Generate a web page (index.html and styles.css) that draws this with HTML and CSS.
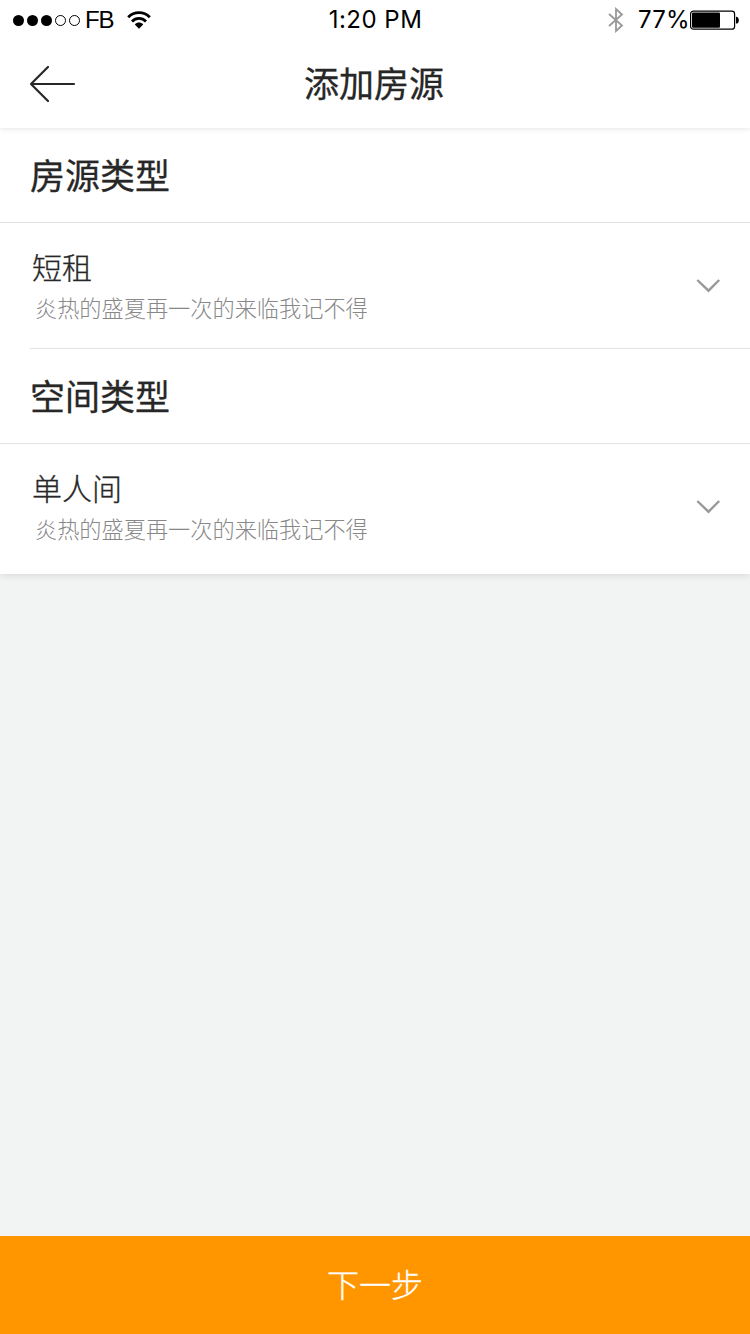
FILE: index.html
```html
<!DOCTYPE html>
<html lang="zh-CN">
<head>
  <meta charset="UTF-8" />
  <meta name="viewport" content="width=device-width, initial-scale=1.0" />
  <title>添加房源</title>
  <link rel="stylesheet" href="styles.css">
</head>
<body>

<header class="top">
  <div class="status">
    <div class="status-left">
      <svg class="signal" width="70" height="14" viewBox="0 0 70 14">
        <circle cx="6.5" cy="7.5" r="5.5" />
        <circle cx="20.5" cy="7.5" r="5.5" />
        <circle cx="34.5" cy="7.5" r="5.5" />
        <circle class="empty" cx="48.5" cy="7.5" r="5" />
        <circle class="empty" cx="62.5" cy="7.5" r="5" />
      </svg>
      <span class="carrier">FB</span>
      <svg class="wifi" width="24" height="18" viewBox="0 0 24 18">
        <path class="arc" d="M1.2 6.2C7.2.1 16.8.1 22.8 6.2M5 10.4c3.9-4 10.1-4 14 0" />
        <path d="M7.8 13.4c2.3-2.4 6.1-2.4 8.4 0L12 17.8z" />
      </svg>
    </div>
    <span class="time">1:20 PM</span>
    <div class="status-right">
      <svg class="bluetooth" width="16" height="26" viewBox="0 0 16 26">
        <path d="M1 7l13 11.5L8 24V2l6 5.5L1 19" />
      </svg>
      <span class="percent">77%</span>
      <svg class="battery" width="49" height="20" viewBox="0 0 49 20">
        <rect class="shell" x=".6" y="1.2" width="44" height="18" rx="2.8" />
        <rect x="2" y="2.6" width="28" height="15.2" rx="1" />
        <path d="M46 6.8c2 0 2.8 1.3 2.8 3.4S48 13.6 46 13.6z" />
      </svg>
    </div>
  </div>

  <nav class="nav">
    <a class="back" href="#">
      <svg width="48" height="38" viewBox="0 0 48 38">
        <path d="M19 2L2 19l17 17M2 19h43" />
      </svg>
    </a>
    <h1>添加房源</h1>
  </nav>
</header>

<main class="main">
  <section class="group">
    <h2>房源类型</h2>
    <div class="option">
      <div class="option-text">
        <p class="name">短租</p>
        <p class="desc">炎热的盛夏再一次的来临我记不得</p>
      </div>
      <svg class="chevron" width="26" height="16" viewBox="0 0 26 16">
        <path d="M2.3 2L13.5 12.7 24.2 2" />
      </svg>
    </div>
  </section>

  <section class="group">
    <h2>空间类型</h2>
    <div class="option">
      <div class="option-text">
        <p class="name">单人间</p>
        <p class="desc">炎热的盛夏再一次的来临我记不得</p>
      </div>
      <svg class="chevron" width="26" height="16" viewBox="0 0 26 16">
        <path d="M2.3 2L13.5 12.7 24.2 2" />
      </svg>
    </div>
  </section>
</main>

<button class="next">下一步</button>

</body>
</html>
```
FILE: styles.css
```css
* {
  margin: 0;
  padding: 0;
  box-sizing: border-box;
}

body {
  display: flex;
  flex-direction: column;
  height: 100vh;
  background: #f2f4f4;
  font-family: "Noto Sans CJK SC", sans-serif;
  color: #272727;
}

svg {
  display: block;
  flex: none;
}

.top {
  height: 128px;
  background: #fff;
  box-shadow: 0 1px 5px rgba(0, 0, 0, 0.1);
  z-index: 2;
}

/* status bar */
.status {
  display: grid;
  grid-template-columns: 1fr auto 1fr;
  align-items: center;
  height: 40px;
  padding: 0 11px 0 12px;
  color: #000;
  font-size: 24px;
  line-height: 40px;
}

.status-left,
.status-right {
  display: flex;
  align-items: center;
}

.status-right {
  justify-content: flex-end;
}

.signal .empty {
  fill: none;
  stroke: #000;
  stroke-width: 1;
}

.carrier {
  margin-left: 3px;
  font-family: "Liberation Sans", Arial, sans-serif;
  letter-spacing: -1.2px;
}

.wifi {
  margin-left: 14px;
}

.wifi .arc {
  fill: none;
  stroke: #000;
  stroke-width: 2.8;
}

.time,
.percent {
  font-family: Inter, sans-serif;
}

.time {
  letter-spacing: 0.5px;
}

.percent {
  letter-spacing: 0.3px;
}

.bluetooth {
  margin-right: 14px;
  fill: none;
  stroke: #999;
  stroke-width: 1.8;
}

.battery .shell {
  fill: none;
  stroke: #000;
  stroke-width: 1.2;
}

/* title bar */
.nav {
  display: grid;
  grid-template-columns: 80px 1fr 80px;
  align-items: center;
  height: 88px;
}

.back {
  padding-left: 29px;
}

.back path {
  fill: none;
  stroke: #272727;
  stroke-width: 2.2;
  stroke-linecap: round;
  stroke-linejoin: round;
}

h1,
h2 {
  font-size: 35px;
  font-weight: 400;
  -webkit-text-stroke: 0.3px #272727;
}

.nav h1 {
  height: 88px;
  padding-right: 2px;
  line-height: 84px;
  text-align: center;
}

.main {
  background: #fff;
  box-shadow: 0 1px 8px rgba(0, 0, 0, 0.12);
}

.group h2 {
  height: 95px;
  padding-left: 30px;
  border-bottom: 1px solid #e2e2e2;
  line-height: 91px;
}

.option {
  display: flex;
  justify-content: space-between;
  align-items: center;
  height: 126px;
  margin-left: 30px;
  padding-right: 29px;
  border-bottom: 1px solid #e2e2e2;
}

.group:last-child .option {
  height: 130px;
  padding-bottom: 4px;
  border-bottom: none;
}

.option-text {
  padding-bottom: 2px;
}

.name {
  padding-left: 2px;
  font-size: 30px;
  font-weight: 300;
  line-height: 44px;
  -webkit-text-stroke: 0.3px #272727;
}

.desc {
  padding-left: 5px;
  color: #888;
  font-size: 22.2px;
  font-weight: 300;
  line-height: 38px;
}

.chevron path {
  fill: none;
  stroke: #999;
  stroke-width: 2.4;
}

.next {
  height: 98px;
  margin-top: auto;
  padding-bottom: 4px;
  border: none;
  background: #ff9600;
  color: #fff;
  font-family: inherit;
  font-size: 32px;
  font-weight: 300;
  -webkit-text-stroke: 0.3px #fff;
}
```
